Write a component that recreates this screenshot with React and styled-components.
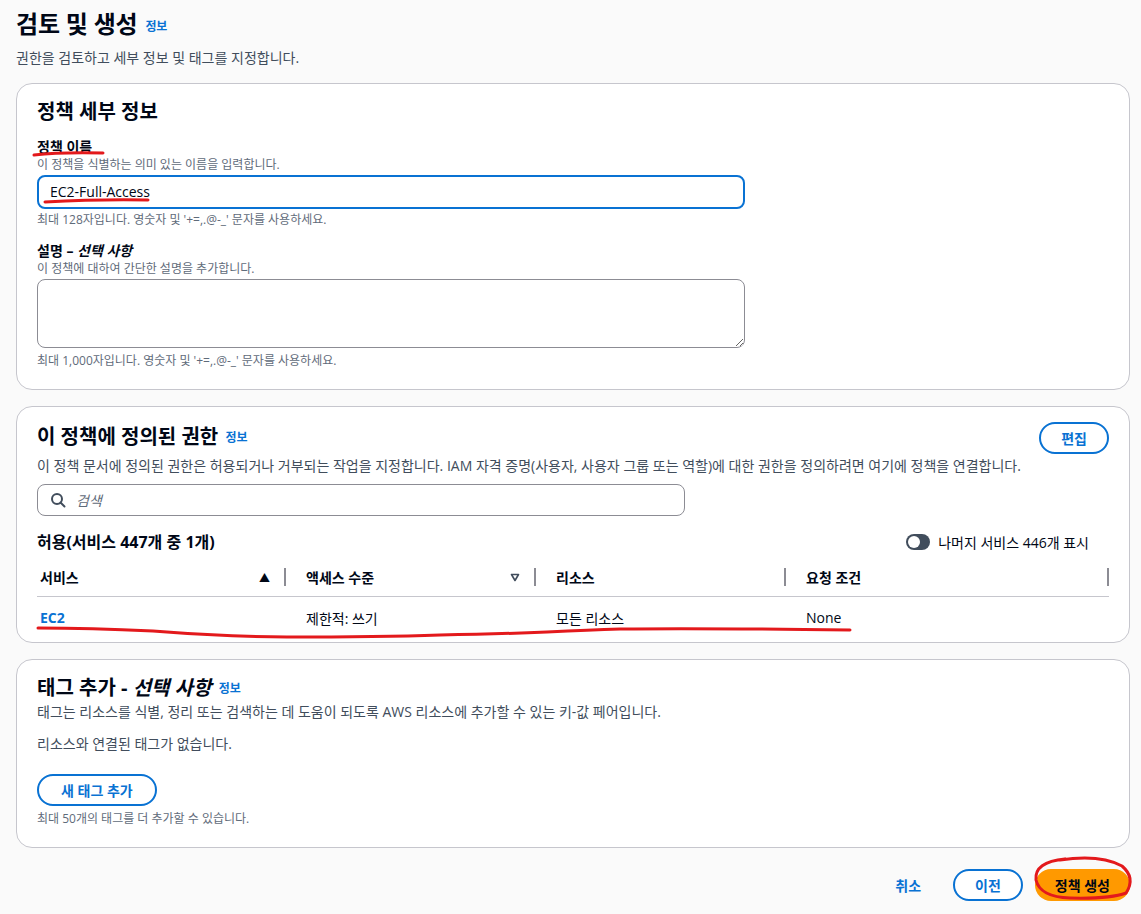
import { createGlobalStyle, styled } from "styled-components";

const GlobalStyle = createGlobalStyle`
  body {
    margin: 0;
    background: #fafafa;
    font-family: "Open Sans", "Noto Sans CJK KR", sans-serif;
    color: #000716;
  }
`;

const columns = [
  { title: "서비스", sort: "up", width: 249 },
  { title: "액세스 수준", sort: "down", width: 250 },
  { title: "리소스", width: 250 },
  { title: "요청 조건" },
];

const rows = [["EC2", "제한적: 쓰기", "모든 리소스", "None"]];

const App = () => {
  return (
    <Page>
      <GlobalStyle />
      <PageHeader>
        <PageTitle>
          검토 및 생성 <InfoLink>정보</InfoLink>
        </PageTitle>
        <PageSub>권한을 검토하고 세부 정보 및 태그를 지정합니다.</PageSub>
      </PageHeader>

      <Card $top={16}>
        <CardTitle $gap={14}>정책 세부 정보</CardTitle>
        <Field>
          <Label>정책 이름</Label>
          <Hint>이 정책을 식별하는 의미 있는 이름을 입력합니다.</Hint>
          <TextInput $focused defaultValue="EC2-Full-Access" />
          <Constraint $top={3}>
            최대 128자입니다. 영숫자 및 '+=,.@-_' 문자를 사용하세요.
          </Constraint>
        </Field>
        <Field>
          <Label>
            설명 – <em>선택 사항</em>
          </Label>
          <Hint>이 정책에 대하여 간단한 설명을 추가합니다.</Hint>
          <TextArea />
          <Constraint $top={5}>
            최대 1,000자입니다. 영숫자 및 '+=,.@-_' 문자를 사용하세요.
          </Constraint>
        </Field>
      </Card>

      <Card $top={15} $bottom={3}>
        <HeaderRow>
          <CardTitle $gap={0}>
            이 정책에 정의된 권한 <InfoLink>정보</InfoLink>
          </CardTitle>
          <PillButton>편집</PillButton>
        </HeaderRow>
        <CardDesc $gap={8}>
          이 정책 문서에 정의된 권한은 허용되거나 거부되는 작업을 지정합니다.
          IAM 자격 증명(사용자, 사용자 그룹 또는 역할)에 대한 권한을
          정의하려면 여기에 정책을 연결합니다.
        </CardDesc>
        <SearchBox>
          <svg width="16" height="16" viewBox="0 0 16 16" fill="none">
            <circle cx="7" cy="7" r="5" stroke="#414d5c" strokeWidth="2" />
            <path d="M10.5 10.5L14.5 14.5" stroke="#414d5c" strokeWidth="2" strokeLinecap="round" />
          </svg>
          <SearchPlaceholder>검색</SearchPlaceholder>
        </SearchBox>
        <TableBar>
          <TableTitle>허용(서비스 447개 중 1개)</TableTitle>
          <ToggleWrap>
            <Toggle />
            나머지 서비스 446개 표시
          </ToggleWrap>
        </TableBar>
        <Table>
          <colgroup>
            {columns.map((c) => (
              <col key={c.title} style={c.width ? { width: c.width } : undefined} />
            ))}
          </colgroup>
          <thead>
            <tr>
              {columns.map((c) => (
                <Th key={c.title}>
                  <ThInner>
                    <span>{c.title}</span>
                    {c.sort === "up" && <SortIcon>▲</SortIcon>}
                    {c.sort === "down" && (
                      <svg width="10" height="10" viewBox="0 0 10 10">
                        <path d="M1.5 2.5H8.5L5 8.5Z" fill="none" stroke="#414d5c" strokeWidth="1.6" strokeLinejoin="round" />
                      </svg>
                    )}
                  </ThInner>
                </Th>
              ))}
            </tr>
          </thead>
          <tbody>
            {rows.map((r) => (
              <tr key={r[0]}>
                {r.map((v, i) => (
                  <Td key={i}>{i === 0 ? <ServiceLink>{v}</ServiceLink> : v}</Td>
                ))}
              </tr>
            ))}
          </tbody>
        </Table>
      </Card>

      <Card $top={16}>
        <CardTitle $gap={1}>
          태그 추가 - <em>선택 사항</em> <InfoLink>정보</InfoLink>
        </CardTitle>
        <CardDesc $gap={12}>
          태그는 리소스를 식별, 정리 또는 검색하는 데 도움이 되도록 AWS
          리소스에 추가할 수 있는 키-값 페어입니다.
        </CardDesc>
        <EmptyText>리소스와 연결된 태그가 없습니다.</EmptyText>
        <PillButton $wide>새 태그 추가</PillButton>
        <Constraint $top={5}>최대 50개의 태그를 더 추가할 수 있습니다.</Constraint>
      </Card>

      <Footer>
        <LinkButton>취소</LinkButton>
        <PillButton>이전</PillButton>
        <PrimaryButton>정책 생성</PrimaryButton>
      </Footer>

      <Marks viewBox="0 0 1141 914" width="1141" height="914">
        <path d="M34 155 Q 60 152 103 153" />
        <path d="M45 202 Q 100 199 148 200" />
        <path d="M38 628 Q 90 628 153 631 Q 230 637 287 637 Q 380 637 440 635 Q 500 634 547 632 Q 590 630 620 629 Q 700 628 850 630" />
        <path d="M1060 860 Q 1100 854 1122 866 Q 1136 878 1126 893 Q 1110 899 1070 898 Q 1040 897 1036 880 Q 1034 862 1065 859" />
      </Marks>
    </Page>
  );
};

export default App;

const Page = styled.div`
  position: relative;
  width: 1141px;
  height: 914px;
  box-sizing: border-box;
  padding: 8px 11px 0 16px;
  overflow: hidden;
`;

const PageHeader = styled.div`
  margin-bottom: 15px;
`;

const PageTitle = styled.h1`
  margin: 0;
  font-size: 24px;
  line-height: 32px;
  font-weight: 700;
  letter-spacing: -0.2px;
`;

const InfoLink = styled.span`
  font-size: 12px;
  font-weight: 700;
  color: #0972d3;
  vertical-align: middle;
  margin-left: 2px;
`;

const PageSub = styled.p`
  margin: 5px 0 0;
  font-size: 14px;
  line-height: 20px;
  color: #414d5c;
`;

const Card = styled.section`
  background: #fff;
  border: 1px solid #c6c6cd;
  border-radius: 16px;
  padding: ${(p) => p.$top ?? 15}px 20px ${(p) => p.$bottom ?? 20}px;
  margin-bottom: 16px;
`;

const CardTitle = styled.h2`
  margin: 0 0 ${(p) => p.$gap ?? 12}px;
  font-size: 20px;
  line-height: 24px;
  font-weight: 700;
  em {
    font-style: italic;
  }
`;

const HeaderRow = styled.div`
  display: flex;
  justify-content: space-between;
  align-items: center;
  margin-bottom: 2px;
`;

const Field = styled.div`
  display: flex;
  flex-direction: column;
  margin-bottom: 14px;
  &:last-child {
    margin-bottom: 0;
  }
`;

const Label = styled.label`
  font-size: 14px;
  line-height: 18px;
  font-weight: 700;
  em {
    font-style: italic;
  }
`;

const Hint = styled.span`
  font-size: 12px;
  line-height: 16px;
  color: #5f6b7a;
  margin-top: 1px;
  margin-bottom: 2px;
`;

const TextInput = styled.input`
  width: 708px;
  height: 34px;
  box-sizing: border-box;
  border: 2px solid ${(p) => (p.$focused ? "#0972d3" : "#8c8c94")};
  border-radius: 8px;
  padding: 0 11px;
  font-family: inherit;
  font-size: 14px;
  color: #000716;
  outline: none;
`;

const TextArea = styled.textarea`
  width: 708px;
  height: 69px;
  box-sizing: border-box;
  border: 1px solid #8c8c94;
  border-radius: 8px;
  resize: vertical;
  font-family: inherit;
`;

const Constraint = styled.span`
  display: block;
  margin-top: ${(p) => p.$top ?? 2}px;
  font-size: 12px;
  line-height: 16px;
  color: #5f6b7a;
`;

const CardDesc = styled.p`
  margin: 0 0 ${(p) => p.$gap ?? 10}px;
  font-size: 14px;
  line-height: 20px;
  color: #414d5c;
`;

const PillButton = styled.button`
  height: 32px;
  box-sizing: border-box;
  padding: 0 ${(p) => (p.$wide ? 22 : 20)}px;
  border: 2px solid #0972d3;
  border-radius: 20px;
  background: #fff;
  color: #0972d3;
  font-family: inherit;
  font-size: 14px;
  font-weight: 700;
  cursor: pointer;
`;

const SearchBox = styled.div`
  width: 648px;
  height: 32px;
  box-sizing: border-box;
  border: 1px solid #8c8c94;
  border-radius: 8px;
  display: flex;
  align-items: center;
  gap: 10px;
  padding: 0 12px;
  margin-bottom: 14px;
`;

const SearchPlaceholder = styled.span`
  font-size: 14px;
  font-style: italic;
  color: #5f6b7a;
`;

const TableBar = styled.div`
  display: flex;
  justify-content: space-between;
  align-items: center;
  padding-right: 20px;
  margin-bottom: 4px;
`;

const TableTitle = styled.h3`
  margin: 0;
  font-size: 16px;
  line-height: 24px;
  font-weight: 700;
`;

const ToggleWrap = styled.div`
  display: flex;
  align-items: center;
  gap: 8px;
  font-size: 14px;
  color: #000716;
`;

const Toggle = styled.span`
  position: relative;
  width: 24px;
  height: 16px;
  border-radius: 8px;
  background: #414d5c;
  &::after {
    content: "";
    position: absolute;
    left: 2px;
    top: 2px;
    width: 12px;
    height: 12px;
    border-radius: 50%;
    background: #fff;
  }
`;

const Table = styled.table`
  width: 100%;
  border-collapse: collapse;
  table-layout: fixed;
`;

const Th = styled.th`
  height: 38px;
  padding: 0 0 0 20px;
  text-align: left;
  font-size: 14px;
  font-weight: 700;
  border-bottom: 1px solid #c6c6cd;
  &:first-child {
    padding-left: 3px;
  }
`;

const ThInner = styled.div`
  display: flex;
  align-items: center;
  justify-content: space-between;
  padding-right: 14px;
  border-right: 2px solid #8c8c94;
  height: 18px;
`;

const SortIcon = styled.span`
  font-size: 11px;
  color: #000716;
`;

const Td = styled.td`
  height: 42px;
  padding: 0 0 0 20px;
  font-size: 14px;
  color: #000716;
  &:first-child {
    padding-left: 3px;
  }
`;

const ServiceLink = styled.a`
  color: #0972d3;
  font-weight: 700;
`;

const EmptyText = styled.p`
  margin: 0 0 20px;
  font-size: 14px;
  line-height: 20px;
  color: #414d5c;
`;

const Footer = styled.div`
  display: flex;
  justify-content: flex-end;
  align-items: center;
  gap: 12px;
  margin-top: 21px;
`;

const LinkButton = styled.button`
  border: none;
  background: none;
  color: #0972d3;
  font-family: inherit;
  font-size: 14px;
  font-weight: 700;
  padding: 0 20px;
`;

const PrimaryButton = styled.button`
  height: 32px;
  padding: 0 20px;
  border: none;
  border-radius: 20px;
  background: #ff9900;
  color: #000716;
  font-family: inherit;
  font-size: 14px;
  font-weight: 700;
`;

const Marks = styled.svg`
  position: absolute;
  left: 0;
  top: 0;
  pointer-events: none;
  path {
    fill: none;
    stroke: #e3191c;
    stroke-width: 3;
    stroke-linecap: round;
  }
`;
